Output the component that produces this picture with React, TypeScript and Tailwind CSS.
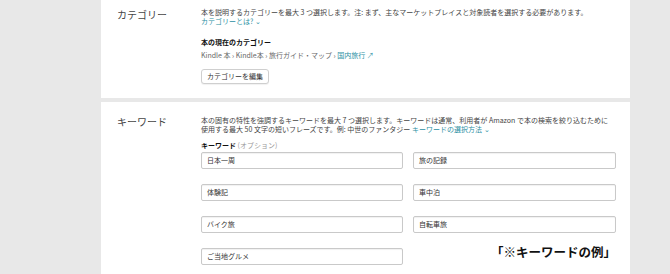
const font = { fontFamily: '"Noto Sans CJK JP", "Noto Sans", sans-serif' };

const keywords = [
  ["日本一周", "旅の記録"],
  ["体験記", "車中泊"],
  ["バイク旅", "自転車旅"],
];

function KeywordInput({ value }: { value: string }) {
  return (
    <div className="h-[17px] flex items-center px-[5px] border border-[#c9c9c9] rounded-[2px] bg-white shadow-[inset_0_1px_1px_rgba(0,0,0,0.06)] text-[7px] text-[#333]">
      {value}
    </div>
  );
}

export default function App() {
  return (
    <div
      className="w-[670px] h-[274px] bg-[#e8e8e8] flex overflow-hidden"
      style={font}
    >
      <div className="w-[101px] shrink-0" />
      <div className="w-[529px] flex flex-col gap-[4px]">
        {/* Category panel */}
        <section className="h-[98px] bg-white flex">
          <h2 className="w-[100px] shrink-0 pl-[16px] pt-[7px] text-[10px] text-[#444]">
            カテゴリー
          </h2>
          <div className="pt-[8px] text-[7px] leading-[9px] text-[#444]">
            <p>
              本を説明するカテゴリーを最大 3 つ選択します。注: まず、主なマーケットプレイスと対象読者を選択する必要があります。
            </p>
            <p className="text-[#2b8fa3]">カテゴリーとは? ⌄</p>
            <p className="mt-[12px] font-bold text-[#111]">本の現在のカテゴリー</p>
            <p className="mt-[4px] text-[#666]">
              Kindle 本 › Kindle本 › 旅行ガイド・マップ ›{" "}
              <span className="text-[#2b8fa3]">国内旅行 ↗</span>
            </p>
            <button className="mt-[9px] h-[15px] px-[5px] border border-[#cfcfcf] rounded-[3px] bg-white shadow-[0_1px_1px_rgba(0,0,0,0.06)] text-[7px] text-[#333]">
              カテゴリーを編集
            </button>
          </div>
        </section>

        {/* Keyword panel */}
        <section className="flex-1 bg-white flex">
          <h2 className="w-[100px] shrink-0 pl-[16px] pt-[12px] text-[10px] text-[#444]">
            キーワード
          </h2>
          <div className="pt-[14px] w-[420px] text-[7px] leading-[9px] text-[#444]">
            <p className="whitespace-nowrap">
              本の固有の特性を強調するキーワードを最大 7 つ選択します。キーワードは通常、利用者が Amazon で本の検索を絞り込むために
              <br />
              使用する最大 50 文字の短いフレーズです。例: 中世のファンタジー{" "}
              <span className="text-[#2b8fa3]">キーワードの選択方法 ⌄</span>
            </p>
            <p className="mt-[7px] font-bold text-[#111]">
              キーワード <span className="font-normal text-[#999]">(オプション)</span>
            </p>
            <div className="mt-[2px] grid grid-cols-[202px_203px] gap-x-[10px] gap-y-[15px]">
              {keywords.flat().map((k) => (
                <KeywordInput key={k} value={k} />
              ))}
              <KeywordInput value="ご当地グルメ" />
              <div className="flex justify-end items-start -mt-[3px]">
                <span className="text-[12.5px] leading-[14px] font-bold text-[#111]">
                  「※キーワードの例」
                </span>
              </div>
            </div>
          </div>
        </section>
      </div>
    </div>
  );
}
